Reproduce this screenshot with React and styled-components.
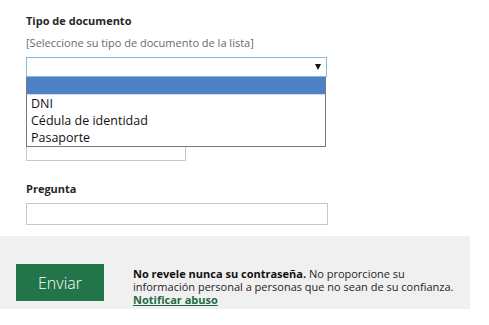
import React from "react";
import styled, { createGlobalStyle } from "styled-components";

const GlobalStyle = createGlobalStyle`
  html, body {
    margin: 0;
    padding: 0;
    background: #ffffff;
  }
  body {
    font-family: "Open Sans", "Noto Sans", sans-serif;
    color: #222;
  }
`;

const Page = styled.div`
  width: 489px;
  height: 325px;
  overflow: hidden;
  background: #fff;
`;

const Form = styled.div`
  padding: 14px 0 0 26px;
  display: flex;
  flex-direction: column;
`;

const Field = styled.div`
  position: relative;
  display: flex;
  flex-direction: column;
  margin-bottom: ${(p) => p.$gap || 0}px;
`;

const Label = styled.div`
  font-size: 11px;
  font-weight: 700;
  line-height: 14px;
  color: #262626;
  margin-bottom: ${(p) => p.$gap || 0}px;
`;

const Hint = styled.div`
  font-size: 11px;
  line-height: 14px;
  color: #6a6a6a;
  margin-bottom: 7px;
`;

const SelectBox = styled.div`
  box-sizing: border-box;
  width: 301px;
  height: 20px;
  border: 1px solid #8cb6e3;
  background: #fff;
  display: flex;
  align-items: center;
  justify-content: flex-end;
  padding-right: 5px;
`;

const Arrow = styled.span`
  width: 0;
  height: 0;
  border-left: 3px solid transparent;
  border-right: 3px solid transparent;
  border-top: 6px solid #111;
`;

const Dropdown = styled.ul`
  position: absolute;
  top: 100%;
  left: 0;
  z-index: 2;
  box-sizing: border-box;
  width: 300px;
  margin: 0;
  padding: 0;
  list-style: none;
  background: #fff;
  border: 1px solid #7a7a7a;
  border-top: none;
`;

const Option = styled.li`
  box-sizing: border-box;
  height: 17px;
  line-height: 17px;
  padding-left: 4px;
  font-size: 12.5px;
  color: #111;
  background: ${(p) => (p.$selected ? "#4c82c3" : "transparent")};
  border-bottom: ${(p) => (p.$selected ? "1px solid #c9dcf2" : "none")};
  ${(p) => p.$selected && "height: 18px;"}
`;

const Input = styled.div`
  box-sizing: border-box;
  width: ${(p) => p.$width}px;
  height: ${(p) => p.$height || 22}px;
  border: 1px solid #c6c6c6;
  background: #fff;
  margin-top: ${(p) => p.$offset || 0}px;
`;

const Footer = styled.div`
  margin-top: 11px;
  width: 470px;
  height: 73px;
  background: #f0f0f0;
  display: flex;
  align-items: flex-start;
  padding-top: 28px;
  box-sizing: border-box;
`;

const SubmitButton = styled.button`
  margin-left: 16px;
  width: 88px;
  height: 37px;
  border: none;
  background: #217548;
  color: #fff;
  font-family: "Open Sans", "Noto Sans", sans-serif;
  font-weight: 300;
  font-size: 16px;
  cursor: pointer;
  flex-shrink: 0;
`;

const Notice = styled.p`
  margin: 3px 0 0 29px;
  font-size: 11px;
  line-height: 13px;
  color: #1f1f1f;
  strong {
    font-weight: 700;
    color: #111;
  }
`;

const AbuseLink = styled.a`
  display: inline-block;
  font-weight: 700;
  color: #1e6b45;
  text-decoration: underline;
`;

export default function App() {
  return (
    <Page>
      <GlobalStyle />
      <Form>
        <Label $gap={8}>Tipo de documento</Label>
        <Hint>[Seleccione su tipo de documento de la lista]</Hint>
        <Field>
          <SelectBox>
            <Arrow />
          </SelectBox>
          <Dropdown>
            <Option $selected />
            <Option>DNI</Option>
            <Option>Cédula de identidad</Option>
            <Option>Pasaporte</Option>
          </Dropdown>
        </Field>
        <Field $gap={21}>
          <Input $width={160} $height={20} $offset={64} />
        </Field>
        <Field>
          <Label $gap={7}>Pregunta</Label>
          <Input $width={302} $height={22} />
        </Field>
      </Form>
      <Footer>
        <SubmitButton>Enviar</SubmitButton>
        <Notice>
          <strong>No revele nunca su contraseña.</strong> No proporcione su
          <br />
          información personal a personas que no sean de su confianza.
          <br />
          <AbuseLink href="#">Notificar abuso</AbuseLink>
        </Notice>
      </Footer>
    </Page>
  );
}
